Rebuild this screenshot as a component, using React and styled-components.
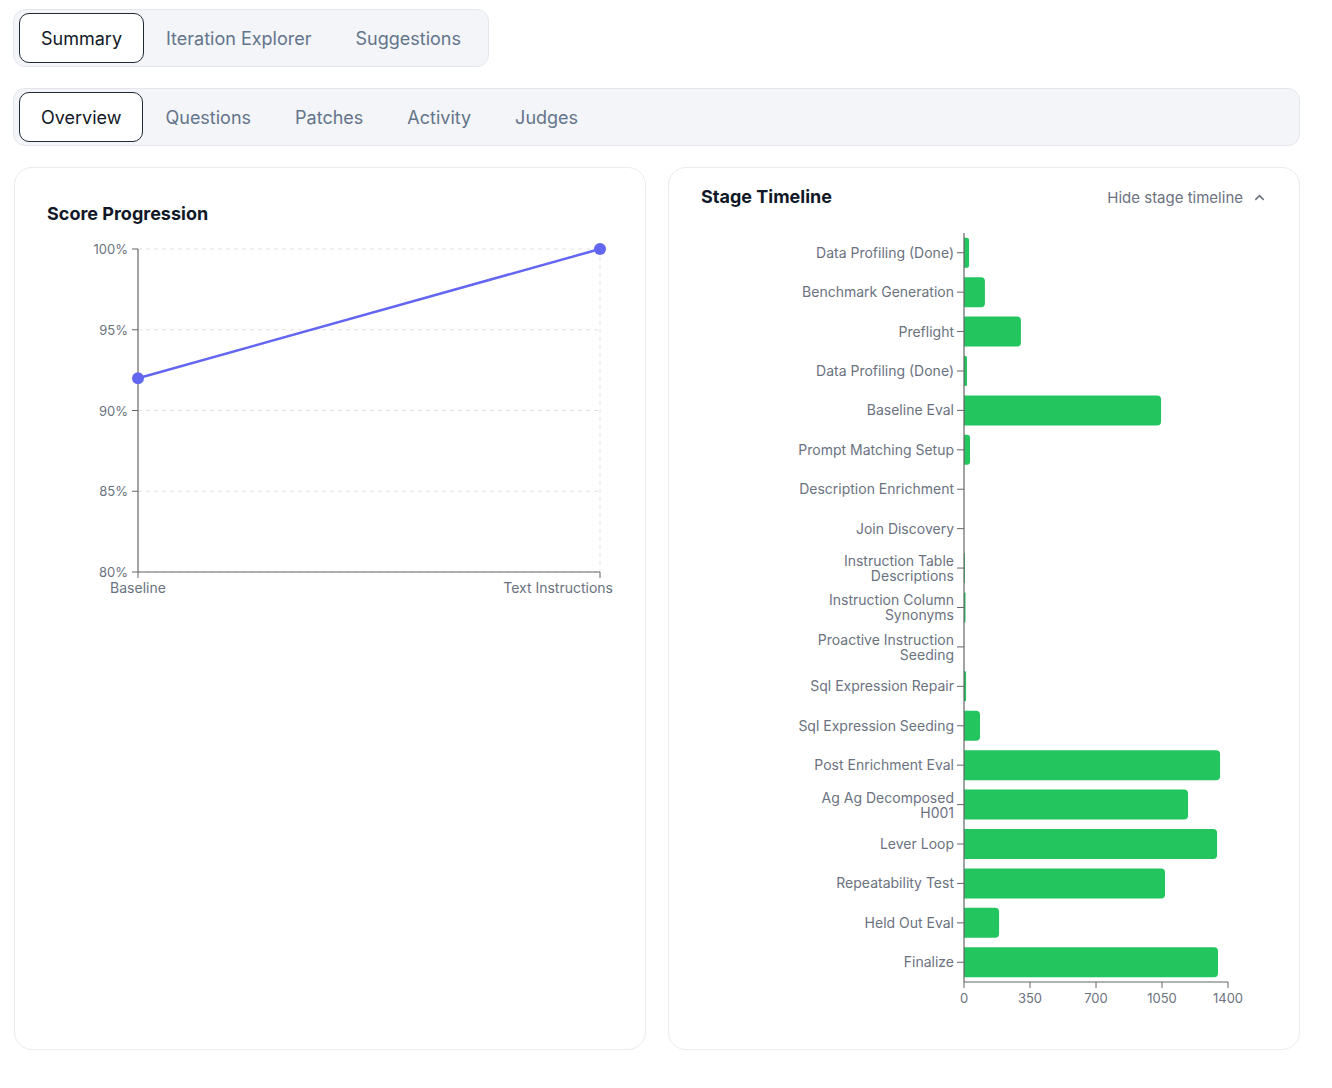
import styled, { createGlobalStyle } from "styled-components";

const GlobalStyle = createGlobalStyle`
  body {
    margin: 0;
    background: #ffffff;
    font-family: Inter, "Noto Sans", "Liberation Sans", sans-serif;
    color: #111827;
  }
`;

const Page = styled.div`
  padding: 9px 32px 30px 13px;
  display: flex;
  flex-direction: column;
  gap: 21px;
`;

const TabBar = styled.div`
  display: flex;
  align-items: center;
  align-self: ${(props) => (props.wide ? "stretch" : "flex-start")};
  padding: 3px 5px;
  background: #f3f5f8;
  border: 1px solid #e3e7ed;
  border-radius: 12px;
`;

const Tab = styled.button`
  font-family: inherit;
  font-size: 18px;
  height: 50px;
  padding: 0 21px;
  border-radius: 10px;
  cursor: pointer;
  background: ${(props) => (props.active ? "#ffffff" : "transparent")};
  border: 1.5px solid ${(props) => (props.active ? "#1f2937" : "transparent")};
  color: ${(props) => (props.active ? "#111827" : "#64748b")};
`;

const Cards = styled.div`
  display: grid;
  grid-template-columns: 1fr 1fr;
  gap: 22px;
  margin-left: 1px;
`;

const Card = styled.section`
  height: 883px;
  box-sizing: border-box;
  border: 1px solid #e8ebef;
  border-radius: 18px;
  padding: ${(props) => (props.tight ? "18px 32px" : "35px 32px")};
  background: #fff;
`;

const CardHeader = styled.div`
  display: flex;
  align-items: center;
  justify-content: space-between;
`;

const Title = styled.h2`
  margin: 0;
  font-size: 18px;
  font-weight: 700;
  line-height: 22px;
  color: #111827;
`;

const HideLink = styled.button`
  display: flex;
  align-items: center;
  gap: 9px;
  border: 0;
  background: none;
  padding: 0;
  font-family: inherit;
  font-size: 15px;
  color: #6b7280;
  cursor: pointer;
`;

const Chart = styled.svg`
  display: block;
  font-family: Inter, "Noto Sans", "Liberation Sans", sans-serif;
  margin-top: ${(props) => props.$top}px;
`;

const axis = "#666666";
const tickText = "#6b7280";

const ScoreChart = () => {
  const x0 = 91;
  const x1 = 553;
  const yTop = 13;
  const yBot = 336;
  const yFor = (v) => yBot - ((v - 80) / 20) * (yBot - yTop);
  const ticks = [100, 95, 90, 85, 80];
  const p1 = { x: x0, y: yFor(92) };
  const p2 = { x: x1, y: yFor(100) };
  return (
    <Chart width="566" height="370" $top={11}>
      {ticks.map((t) => (
        <g key={t}>
          <line x1={x0} x2={x1} y1={yFor(t)} y2={yFor(t)} stroke="#e2e2e2" strokeDasharray="4 4" />
          <line x1={x0 - 6} x2={x0} y1={yFor(t)} y2={yFor(t)} stroke={axis} />
          <text x={x0 - 10} y={yFor(t) + 5} fontSize="13" fill={tickText} textAnchor="end">
            {t}%
          </text>
        </g>
      ))}
      <line x1={x1} x2={x1} y1={yTop} y2={yBot} stroke="#e2e2e2" strokeDasharray="4 4" />
      <line x1={x0} x2={x0} y1={yTop} y2={yBot} stroke={axis} strokeWidth="1.2" />
      <line x1={x0} x2={x1} y1={yBot} y2={yBot} stroke={axis} strokeWidth="1.2" />
      <line x1={x0} x2={x0} y1={yBot} y2={yBot + 6} stroke={axis} />
      <line x1={x1} x2={x1} y1={yBot} y2={yBot + 6} stroke={axis} />
      <text x={x0} y={yBot + 21} fontSize="14" fill={tickText} textAnchor="middle">
        Baseline
      </text>
      <text x={566} y={yBot + 21} fontSize="14" fill={tickText} textAnchor="end">
        Text Instructions
      </text>
      <line x1={p1.x} y1={p1.y} x2={p2.x} y2={p2.y} stroke="#6366f1" strokeWidth="2.5" />
      <circle cx={p1.x} cy={p1.y} r="6" fill="#6366f1" />
      <circle cx={p2.x} cy={p2.y} r="6" fill="#6366f1" />
    </Chart>
  );
};

const stages = [
  { label: ["Data Profiling (Done)"], value: 27 },
  { label: ["Benchmark Generation"], value: 111 },
  { label: ["Preflight"], value: 302 },
  { label: ["Data Profiling (Done)"], value: 16 },
  { label: ["Baseline Eval"], value: 1045 },
  { label: ["Prompt Matching Setup"], value: 32 },
  { label: ["Description Enrichment"], value: 0 },
  { label: ["Join Discovery"], value: 0 },
  { label: ["Instruction Table", "Descriptions"], value: 5 },
  { label: ["Instruction Column", "Synonyms"], value: 8 },
  { label: ["Proactive Instruction", "Seeding"], value: 0 },
  { label: ["Sql Expression Repair"], value: 11 },
  { label: ["Sql Expression Seeding"], value: 85 },
  { label: ["Post Enrichment Eval"], value: 1358 },
  { label: ["Ag Ag Decomposed", "H001"], value: 1188 },
  { label: ["Lever Loop"], value: 1342 },
  { label: ["Repeatability Test"], value: 1066 },
  { label: ["Held Out Eval"], value: 186 },
  { label: ["Finalize"], value: 1347 },
];

const barPath = (x, y, w, h, r) => {
  const rr = Math.min(r, w / 2);
  return `M${x},${y} H${x + w - rr} Q${x + w},${y} ${x + w},${y + rr} V${y + h - rr} Q${x + w},${y + h} ${x + w - rr},${y + h} H${x} Z`;
};

const TimelineChart = () => {
  const ax = 263;
  const top = 13;
  const band = 39.42;
  const bottom = top + band * stages.length;
  const scale = 264 / 1400;
  const xTicks = [0, 350, 700, 1050, 1400];
  return (
    <Chart width="566" height="800" $top={12}>
      {stages.map((s, i) => {
        const cy = top + band * (i + 0.5);
        const w = s.value * scale;
        return (
          <g key={i}>
            {w > 0 && <path d={barPath(ax, cy - 15, w, 30, 4)} fill="#22c55e" />}
            <line x1={ax - 7} x2={ax} y1={cy} y2={cy} stroke={axis} />
            {s.label.length === 1 ? (
              <text x={ax - 10} y={cy + 5} fontSize="14" fill={tickText} textAnchor="end">
                {s.label[0]}
              </text>
            ) : (
              <text x={ax - 10} y={cy - 2} fontSize="14" fill={tickText} textAnchor="end">
                <tspan x={ax - 10}>{s.label[0]}</tspan>
                <tspan x={ax - 10} dy="15">
                  {s.label[1]}
                </tspan>
              </text>
            )}
          </g>
        );
      })}
      <line x1={ax} x2={ax} y1={top} y2={bottom} stroke={axis} strokeWidth="1.2" />
      <line x1={ax} x2={ax + 1400 * scale} y1={bottom} y2={bottom} stroke={axis} strokeWidth="1.2" />
      {xTicks.map((t) => (
        <g key={t}>
          <line x1={ax + t * scale} x2={ax + t * scale} y1={bottom} y2={bottom + 6} stroke={axis} />
          <text x={ax + t * scale} y={bottom + 21} fontSize="13" fill={tickText} textAnchor="middle">
            {t}
          </text>
        </g>
      ))}
    </Chart>
  );
};

const ChevronUp = () => (
  <svg width="15" height="15" viewBox="0 0 24 24" fill="none" stroke="#6b7280" strokeWidth="2.4" strokeLinecap="round" strokeLinejoin="round">
    <path d="m18 15-6-6-6 6" />
  </svg>
);

export default function App() {
  return (
    <>
      <GlobalStyle />
      <Page>
        <TabBar>
          <Tab active>Summary</Tab>
          <Tab>Iteration Explorer</Tab>
          <Tab>Suggestions</Tab>
        </TabBar>
        <TabBar wide>
          <Tab active>Overview</Tab>
          <Tab>Questions</Tab>
          <Tab>Patches</Tab>
          <Tab>Activity</Tab>
          <Tab>Judges</Tab>
        </TabBar>
        <Cards>
          <Card>
            <Title>Score Progression</Title>
            <ScoreChart />
          </Card>
          <Card tight>
            <CardHeader>
              <Title>Stage Timeline</Title>
              <HideLink>
                Hide stage timeline
                <ChevronUp />
              </HideLink>
            </CardHeader>
            <TimelineChart />
          </Card>
        </Cards>
      </Page>
    </>
  );
}
